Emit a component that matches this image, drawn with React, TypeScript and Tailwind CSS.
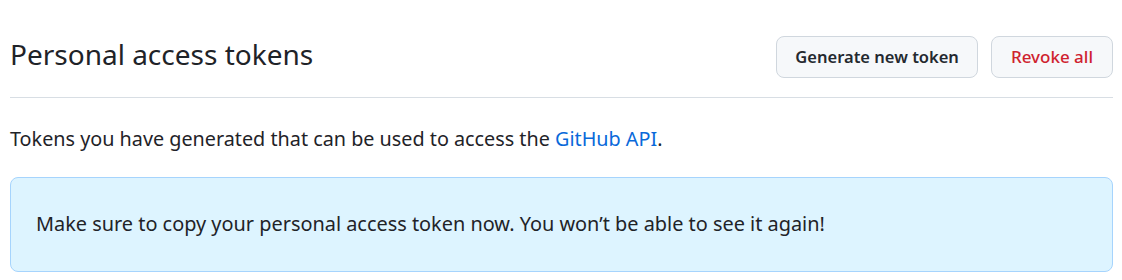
import React from 'react';

const App: React.FC = () => {
  return (
    <div className="min-h-[280px] bg-white pl-[10px] pr-[9px] pt-[36px] text-[#1f2328] font-['Noto_Sans',sans-serif]">
      <div className="flex items-center justify-between border-b border-[#d8dee4] pb-[19px]">
        <h2 className="-mt-[6px] text-[28px] font-normal leading-[40px]">Personal access tokens</h2>
        <div className="flex gap-[13px]">
          <button
            type="button"
            className="h-[42px] rounded-[8px] border border-[#d0d7de] bg-[#f6f8fa] px-[18px] text-[16.5px] font-semibold text-[#24292f]"
          >
            Generate new token
          </button>
          <button
            type="button"
            className="h-[42px] rounded-[8px] border border-[#d0d7de] bg-[#f6f8fa] px-[19px] text-[17px] font-medium text-[#cf222e]"
          >
            Revoke all
          </button>
        </div>
      </div>

      <p className="mt-[27px] text-[19.8px] leading-[28px]">
        Tokens you have generated that can be used to access the{' '}
        <a href="#" className="text-[#0969da]">GitHub API</a>.
      </p>

      <div className="mt-[24px] rounded-[8px] border border-[#a6d4fd] bg-[#ddf4ff] px-[25px] pb-[33px] pt-[32px] text-[19.9px] leading-[28px]">
        Make sure to copy your personal access token now. You won’t be able to see it again!
      </div>
    </div>
  );
};

export default App;
